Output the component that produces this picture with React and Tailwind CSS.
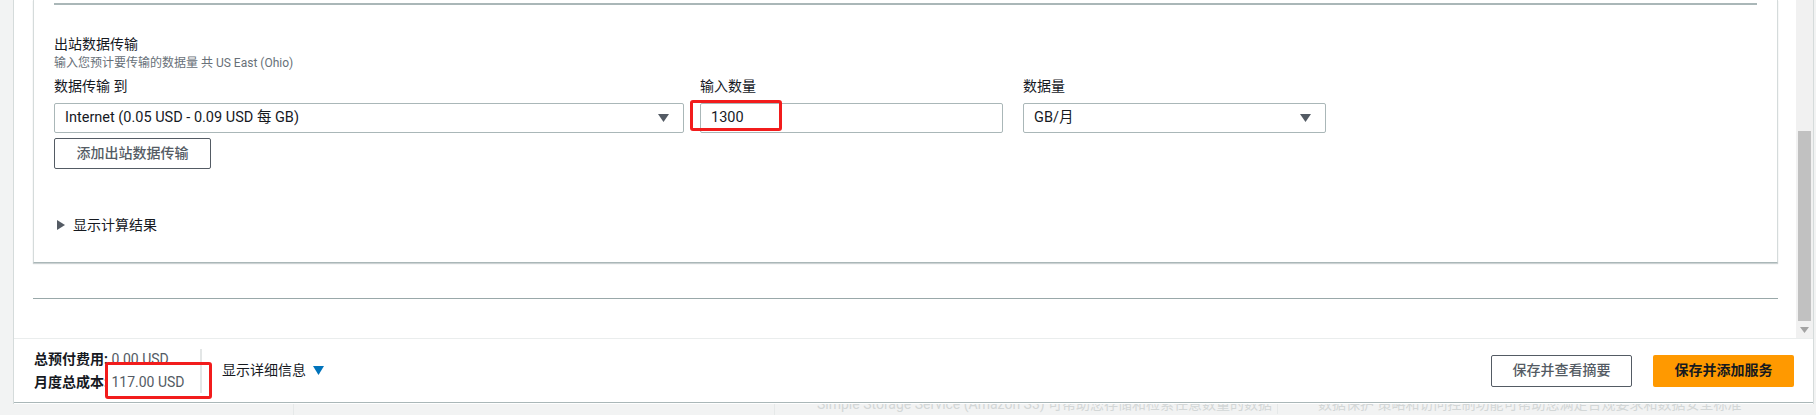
import React from 'react'

const SANS = "font-[family-name:Roboto,'Noto_Sans_CJK_SC',sans-serif]"

function Caret({ className = '' }) {
  return (
    <svg width="11" height="8" viewBox="0 0 11 8" className={className}>
      <path d="M0 0h11L5.5 8z" fill="currentColor" />
    </svg>
  )
}

function SelectBox({ value, className = '' }) {
  return (
    <div className={`h-[30px] border border-[#aab7b8] rounded-[2px] bg-white flex items-center pl-[10px] pr-[14px] ${className}`}>
      <span className="flex-1 text-[14.5px] text-[#16191f] leading-none">{value}</span>
      <Caret className="text-[#545b64]" />
    </div>
  )
}

function Scrollbar() {
  return (
    <div className="w-[17px] bg-[#f1f1f1] flex flex-col">
      <div className="h-[131px]" />
      <div className="h-[190px] mx-[2px] bg-[#c1c1c1]" />
      <div className="flex-1 flex items-center justify-center">
        <svg width="9" height="6" viewBox="0 0 9 6">
          <path d="M0 0h9L4.5 6z" fill="#a3a3a3" />
        </svg>
      </div>
    </div>
  )
}

function OutboundCard() {
  return (
    <div className="border-x border-[#d5dbdb] border-b border-b-[#aab7b8] shadow-[0_1px_1px_rgba(0,28,36,0.2)] px-[20px] pt-[3px] pb-[27px]">
      <div className="h-[2px] bg-[#aab7b8]" />

      <div className="mt-[29px] text-[14px] leading-[20px] text-[#16191f]">出站数据传输</div>
      <div className="mt-[1px] text-[12px] leading-[16px] text-[#687078]">输入您预计要传输的数据量 共 US East (Ohio)</div>

      {/* three inputs */}
      <div className="mt-[5px] flex">
        <div className="w-[630px] flex flex-col">
          <div className="text-[14px] leading-[20px] text-[#16191f]">数据传输 到</div>
          <SelectBox className="mt-[7px]" value="Internet (0.05 USD - 0.09 USD 每 GB)" />
        </div>
        <div className="ml-[16px] w-[303px] flex flex-col">
          <div className="text-[14px] leading-[20px] text-[#16191f]">输入数量</div>
          <div className="relative mt-[7px] h-[30px] border border-[#aab7b8] rounded-[2px] flex items-center pl-[10px] text-[14.5px] text-[#16191f]">
            1300
            <div className="absolute left-[-11px] top-[-4px] w-[92px] h-[31px] border-[3px] border-[#f21c1c] rounded-[3px]" />
          </div>
        </div>
        <div className="ml-[20px] w-[303px] flex flex-col">
          <div className="text-[14px] leading-[20px] text-[#16191f]">数据量</div>
          <SelectBox className="mt-[7px]" value="GB/月" />
        </div>
      </div>

      <button className="mt-[5px] h-[31px] w-[157px] border border-[#545b64] rounded-[2px] bg-white text-[14px] font-medium text-[#545b64] flex items-center justify-center">
        添加出站数据传输
      </button>

      <div className="mt-[46px] flex items-center h-[20px]">
        <svg width="8" height="10" viewBox="0 0 8 10" className="ml-[3px]">
          <path d="M0 0l8 5-8 5z" fill="#545b64" />
        </svg>
        <span className="ml-[8px] text-[14px] leading-[20px] text-[#16191f]">显示计算结果</span>
      </div>
    </div>
  )
}

function Footer() {
  return (
    <div className="relative h-[65px] border-t border-[#eaeded] border-b border-b-[#aab7b8] bg-white flex items-center pl-[20px] pr-[19px]">
      <div className="w-[166px] text-[14px] leading-[23px] pt-[1px]">
        <div className="whitespace-nowrap">
          <span className="font-bold text-[#16191f]">总预付费用:</span>
          <span className="text-[#545b64]"> 0.00 USD</span>
        </div>
        <div className="whitespace-nowrap">
          <span className="font-bold text-[#16191f]">月度总成本:</span>
          <span className="text-[#545b64]"> 117.00 USD</span>
        </div>
      </div>
      <div className="w-[2px] h-[44px] bg-[#e3e6e6]" />
      <div className="ml-[20px] flex items-center">
        <span className="text-[14px] text-[#16191f]">显示详细信息</span>
        <svg width="11" height="9" viewBox="0 0 11 9" className="ml-[7px]">
          <path d="M0 0h11L5.5 9z" fill="#0073bb" />
        </svg>
      </div>

      <div className="ml-auto flex gap-[21px]">
        <button className="h-[32px] w-[141px] border border-[#545b64] rounded-[2px] bg-white text-[14px] font-medium text-[#545b64]">
          保存并查看摘要
        </button>
        <button className="h-[32px] w-[141px] rounded-[2px] bg-[#ff9900] text-[14px] font-bold text-[#16191f]">
          保存并添加服务
        </button>
      </div>

      {/* annotation */}
      <div className="absolute left-[91px] top-[23px] w-[107px] h-[37px] border-[3px] border-[#f21c1c] rounded-[3px]" />
    </div>
  )
}

export default function App() {
  return (
    <div className={`w-[1816px] h-[415px] overflow-hidden bg-[#f2f3f3] flex flex-col ${SANS}`}>
      <div className="flex h-[404px]">
        <div className="w-[13px]" />
        <div className="w-[1801px] border-x border-[#d5dbdb] bg-white flex flex-col">
          <div className="h-[338px] flex">
            <div className="flex-1 pl-[19px] pr-[18px]">
              <OutboundCard />
              <div className="mt-[35px] h-px bg-[#99a8a9]" />
            </div>
            <Scrollbar />
          </div>
          <Footer />
        </div>
        <div className="flex-1" />
      </div>

      {/* page content peeking below the sticky footer */}
      <div className="h-[11px] overflow-hidden flex text-[14px] leading-[20px] text-[#d3d7d7]">
        <div className="w-[294px] h-[20px] border-r border-[#e6e9e9]" />
        <div className="w-[481px] h-[20px] border-r border-[#e6e9e9]" />
        <div className="w-[503px] h-[20px] border-r border-[#e6e9e9] -mt-[10px] pl-[42px] whitespace-nowrap overflow-hidden">
          Simple Storage Service (Amazon S3) 可帮助您存储和检索任意数量的数据
        </div>
        <div className="flex-1 -mt-[10px] pl-[40px] whitespace-nowrap overflow-hidden">
          数据保护 策略和访问控制功能可帮助您满足合规要求和数据安全标准
        </div>
      </div>
    </div>
  )
}
